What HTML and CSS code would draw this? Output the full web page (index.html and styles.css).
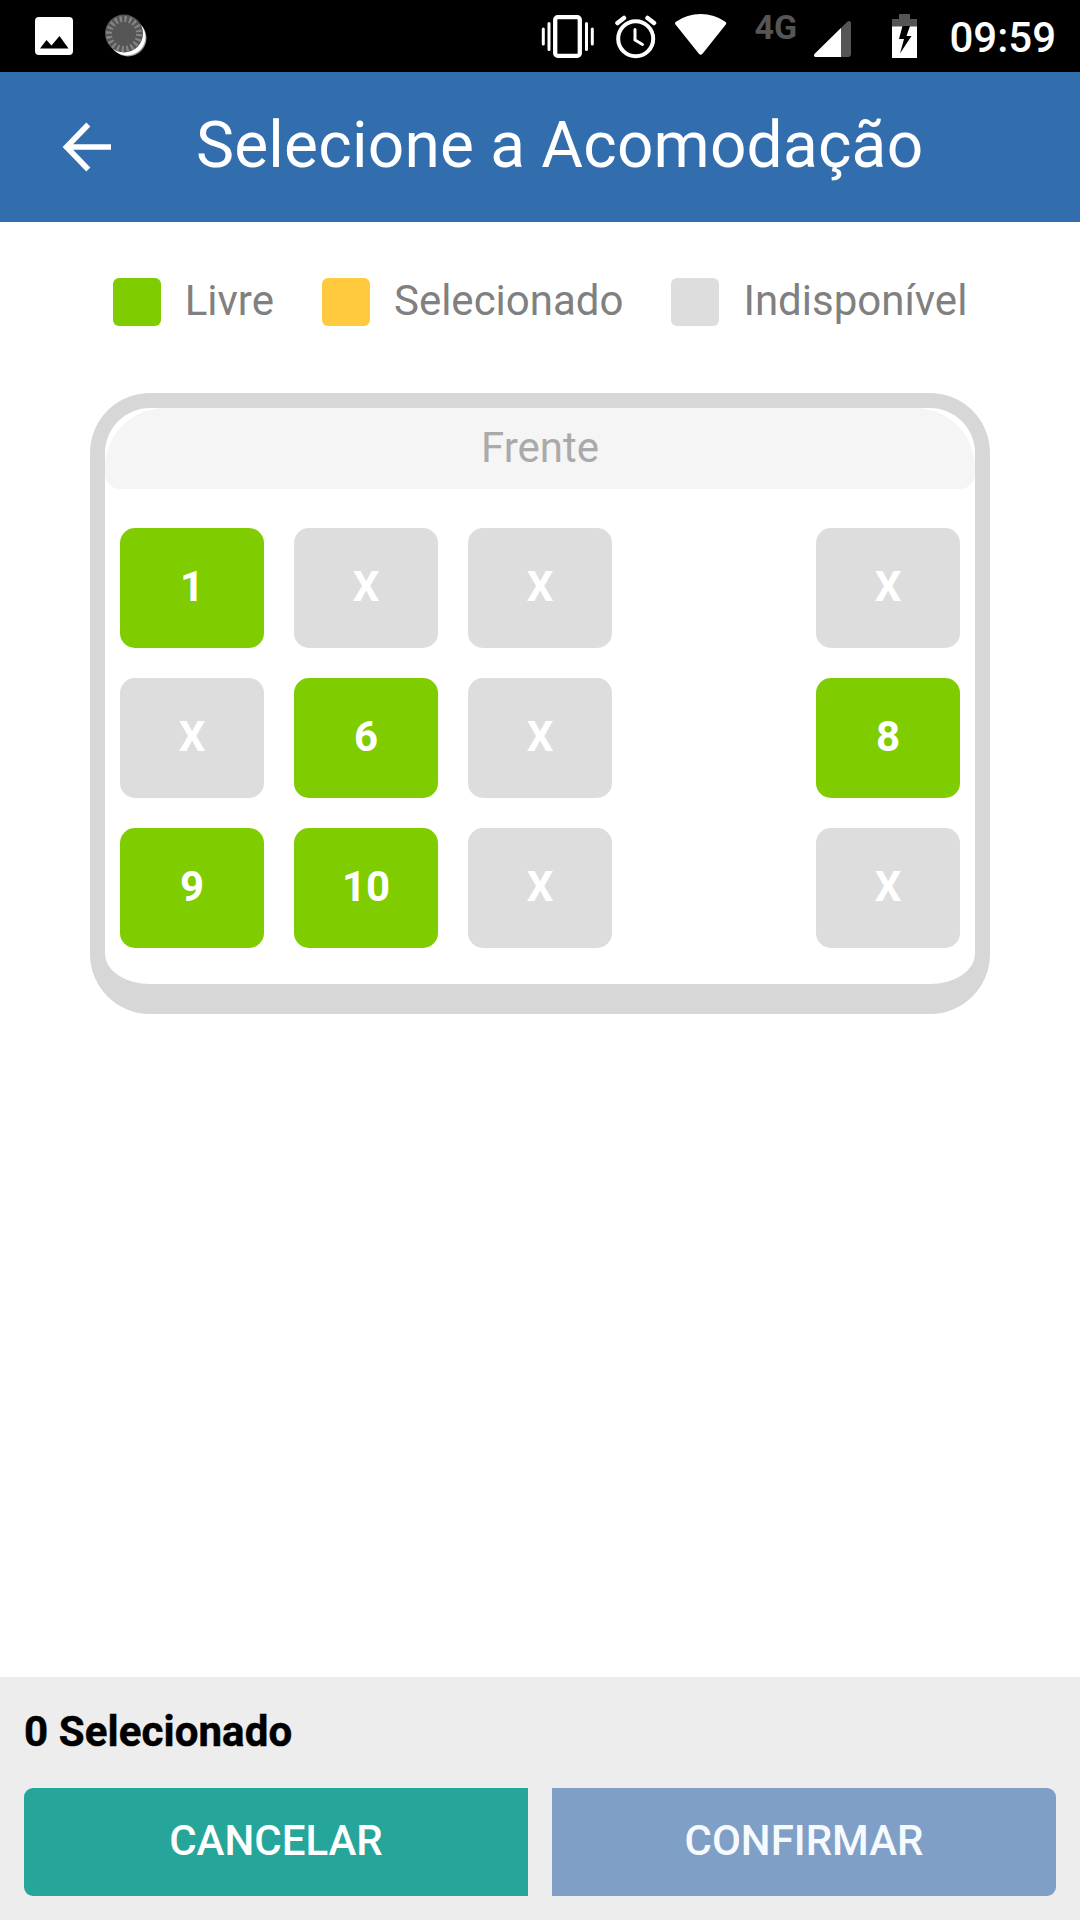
FILE: index.html
```html
<!DOCTYPE html>
<html lang="pt-BR">
<head>
  <meta charset="UTF-8" />
  <title>Selecione a Acomodação</title>
  <meta name="viewport" content="width=device-width, initial-scale=1.0" />
  <link rel="stylesheet" href="styles.css">
</head>
<body>

<div class="status-bar">
  <div class="status-left">
    <svg width="40" height="40" viewBox="34 16 40 40">
      <rect x="35" y="17" width="38" height="38" rx="4" fill="#fff"/>
      <path d="M40 48.5l6.5-8.5 5 5.500 8-9.500 9 12.500z" fill="#000"/>
    </svg>
    <svg width="44" height="44" viewBox="104 14 44 44">
      <circle cx="128" cy="38" r="18.500" fill="#999"/>
      <circle cx="127" cy="37" r="18.500" fill="#fff"/>
      <circle cx="124" cy="33.500" r="19" fill="#555"/>
      <circle cx="124" cy="34" r="15" fill="none" stroke="#858585" stroke-width="6" stroke-dasharray="2.200 2.512"/>
    </svg>
  </div>
  <div class="status-right">
    <svg class="vibrate" width="54" height="46" viewBox="541 13 54 46">
      <rect x="555.200" y="17.200" width="24.600" height="38.600" rx="2.500" fill="none" stroke="#fff" stroke-width="4.300"/>
      <path d="M543.300 29v15M549 23.500v26M586.500 23.500v26M592.300 29v15" stroke="#fff" stroke-width="3" stroke-linecap="round"/>
    </svg>
    <svg class="alarm" width="42" height="46" viewBox="615 13 42 46">
      <circle cx="635.700" cy="38.700" r="17.500" fill="none" stroke="#fff" stroke-width="4"/>
      <path d="M617.500 23l6.500-5M647.500 18l6.500 5" stroke="#fff" stroke-width="4.500" stroke-linecap="round"/>
      <path d="M635 29.500v10.500l7.500 4.500" fill="none" stroke="#fff" stroke-width="3" stroke-linecap="round"/>
    </svg>
    <svg class="wifi" width="52" height="46" viewBox="675 12 52 46">
      <path d="M675.500 24.500q-1.200-1.600.5-2.800Q687 14 700.700 14t24.600 7.700q1.700 1.200.5 2.800l-23.300 29.300q-1.800 2-3.600 0z" fill="#fff"/>
    </svg>
    <span class="network">4G</span>
    <svg class="signal" width="38" height="38" viewBox="813 20 38 38">
      <path d="M816 57q-3-.5-1.500-3l33-32.500q3-1.500 3.500 1.500v31q0 3-3 3z" fill="#555"/>
      <path d="M816 57q-3-.5-1.500-3l26.500-26v29z" fill="#fff"/>
    </svg>
    <svg class="battery" width="25" height="44" viewBox="892 14 25 44">
      <path d="M899 14h11v5h7v8h-25v-8h7z" fill="#555"/>
      <path d="M892 26.500h25V58h-25z" fill="#fff"/>
      <path d="M902.500 26h7.500l-3.500 10h5l-11.500 17.500 4-14.500h-5z" fill="#000"/>
    </svg>
    <span class="clock">09:59</span>
  </div>
</div>

<header>
  <svg width="50" height="50" viewBox="0 0 50 50">
    <path d="M26.300 2.500L4.500 25 26.300 47.500M5 25h44" fill="none" stroke="#fff" stroke-width="5.600"/>
  </svg>
  <h1>Selecione a Acomodação</h1>
</header>

<main>
  <div class="legend">
    <div class="legend-item"><span class="swatch free"></span>Livre</div>
    <div class="legend-item"><span class="swatch selected"></span>Selecionado</div>
    <div class="legend-item"><span class="swatch taken"></span>Indisponível</div>
  </div>

  <div class="vehicle">
    <div class="front">Frente</div>
    <div class="seats">
      <div class="seat free">1</div>
      <div class="seat taken">X</div>
      <div class="seat taken">X</div>
      <div class="aisle"></div>
      <div class="seat taken">X</div>

      <div class="seat taken">X</div>
      <div class="seat free">6</div>
      <div class="seat taken">X</div>
      <div class="aisle"></div>
      <div class="seat free">8</div>

      <div class="seat free">9</div>
      <div class="seat free">10</div>
      <div class="seat taken">X</div>
      <div class="aisle"></div>
      <div class="seat taken">X</div>
    </div>
  </div>
</main>

<footer>
  <div class="count">0 Selecionado</div>
  <div class="actions">
    <button type="button" class="cancel">CANCELAR</button>
    <button type="button" class="confirm">CONFIRMAR</button>
  </div>
</footer>

</body>
</html>
```
FILE: styles.css
```css
* {
  box-sizing: border-box;
}
body {
  margin: 0;
  height: 1920px;
  display: flex;
  flex-direction: column;
  font-family: Roboto, sans-serif;
  font-size: 42px;
  background-color: #fff;
}
svg {
  display: block;
  flex: none;
}
.status-bar {
  height: 72px;
  padding: 0 24px 0 34px;
  display: flex;
  justify-content: space-between;
  align-items: center;
  background-color: #000;
  color: #fff;
}
.status-left {
  display: flex;
  align-items: center;
  gap: 30px;
}
.status-right {
  display: flex;
  align-items: center;
}
.alarm {
  margin-left: 20px;
}
.wifi {
  margin-left: 18px;
  margin-bottom: 2px;
}
.network {
  width: 59px;
  margin-left: 27px;
  margin-bottom: 18px;
  font-size: 34px;
  line-height: 36px;
  font-weight: 700;
  color: #555;
}
.signal {
  margin-top: 6px;
}
.battery {
  margin-left: 41px;
}
.clock {
  margin-left: 32px;
  font-weight: 500;
  line-height: 48px;
  margin-top: 4px;
}
header {
  height: 150px;
  padding-left: 62px;
  display: flex;
  align-items: center;
  background-color: #326dad;
  color: #fff;
}
h1 {
  margin: 0 0 4px 84px;
  font-size: 64px;
  font-weight: 400;
  letter-spacing: 0.2px;
  white-space: nowrap;
}
main {
  flex: 1;
  padding-top: 56px;
}
.legend {
  display: flex;
  justify-content: center;
  gap: 48px;
  height: 48px;
  line-height: 46px;
  color: #808080;
}
.legend-item {
  display: flex;
}
.swatch {
  width: 48px;
  height: 48px;
  margin-right: 24px;
  border-radius: 6px;
}
.free {
  background-color: #7fcc00;
}
.selected {
  background-color: #ffca3d;
}
.taken {
  background-color: #ddd;
}
.vehicle {
  width: 900px;
  height: 621px;
  margin: 67px auto 0;
  border: 15px solid #d7d7d7;
  border-bottom-width: 30px;
  border-radius: 60px;
}
.front {
  height: 81px;
  border-radius: 60px 60px 15px 15px;
  background-color: #f5f5f5;
  color: #aaa;
  text-align: center;
  line-height: 80px;
}
.seats {
  display: grid;
  grid-template-columns: repeat(5, 144px);
  grid-auto-rows: 120px;
  gap: 30px;
  padding: 39px 15px 0;
}
.seat {
  border-radius: 15px;
  color: #fff;
  font-weight: 700;
  text-align: center;
  line-height: 118px;
}
footer {
  height: 243px;
  padding: 31px 24px 24px;
  background-color: #ededed;
}
.count {
  line-height: 48px;
  margin-bottom: 32px;
  font-weight: 700;
  letter-spacing: 0.1px;
  -webkit-text-stroke: 0.5px #000;
  color: #000;
}
.actions {
  display: flex;
  gap: 24px;
}
.actions button {
  flex: 1;
  height: 108px;
  padding: 0 0 4px;
  border: none;
  font-family: inherit;
  font-size: 42px;
  font-weight: 500;
  color: #fff;
}
.cancel {
  border-radius: 9px 0 0 9px;
  background-color: #26a69a;
}
.actions .confirm {
  border-radius: 0 9px 9px 0;
  background-color: #7f9fc6;
  color: #f6fafe;
}
```
